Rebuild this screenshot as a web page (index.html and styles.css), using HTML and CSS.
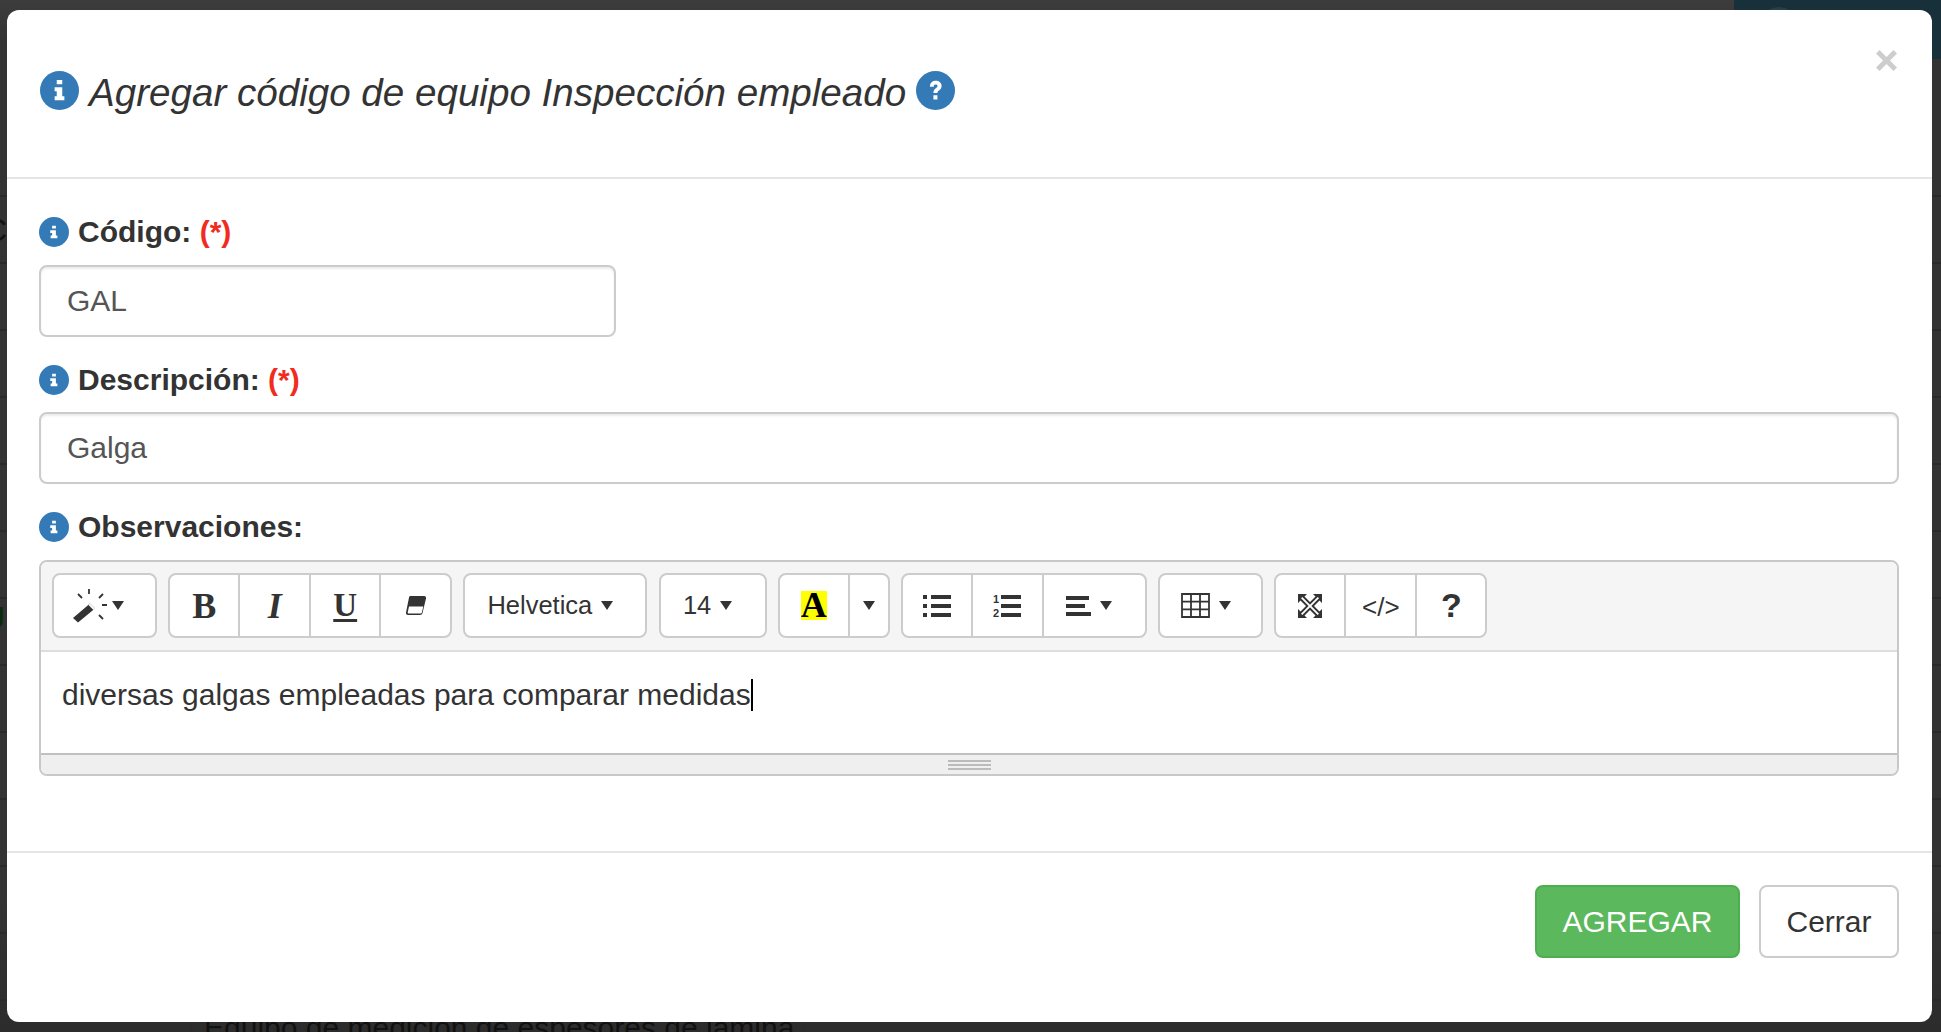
FILE: index.html
```html
<!DOCTYPE html>
<html lang="es">
<head>
<meta charset="utf-8">
<title>Agregar código de equipo</title>
<link rel="stylesheet" href="styles.css">
</head>
<body>
<div class="backdrop">
  <div class="bg-lines"></div>
  <div class="bg-teal"><span class="bg-avatar"></span></div>
  <div class="bg-c">C</div>
  <div class="bg-u">U</div>
  <div class="bg-row">Equipo de medición de espesores de lámina</div>
</div>
<main class="modal">
  <header class="modal-header">
    <button class="close" aria-label="Cerrar">
      <svg width="21" height="21" viewBox="0 0 21 21"><path d="M0 3.500 3.500 0 10.500 7 17.500 0 21 3.500 14 10.500 21 17.500 17.500 21 10.500 14 3.500 21 0 17.500 7 10.500Z" fill="#cdcdcd"/></svg>
    </button>
    <svg class="ico ico-lg" viewBox="0 0 24 24"><circle cx="12" cy="12" r="12" fill="#337ab7"/><path d="M10.300 5.500h3.400v2.600h-3.400zM9 10h4.700v5.500H15V18H9v-2.500h1.300v-3H9z" fill="#fff"/></svg>
    <h4 class="modal-title">Agregar código de equipo Inspección empleado</h4>
    <svg class="ico ico-lg" viewBox="0 0 24 24"><circle cx="12" cy="12" r="12" fill="#337ab7"/><path transform="translate(12 12) scale(.85) translate(-12 -12)" d="M8 9.200C8 6.400 9.900 5 12.200 5c2.300 0 4.200 1.500 4.200 3.800 0 1.700-.9 2.500-1.900 3.200-.8.600-1.100.900-1.100 1.900h-2.900c0-1.800.5-2.600 1.700-3.500.8-.6 1.300-1 1.300-1.600 0-.7-.6-1.200-1.400-1.200-.9 0-1.400.6-1.400 1.600zM10.500 15.500h2.900v3h-2.900z" fill="#fff"/></svg>
  </header>
  <section class="modal-body">
    <div class="form-group">
      <label class="label"><svg class="ico" viewBox="0 0 24 24"><circle cx="12" cy="12" r="12" fill="#337ab7"/><path d="M10.500 7h3v2.200h-3zM9 10.500h4.500v4.300h1.200V17H9.300v-2.200h1.200v-2.100H9z" fill="#fff"/></svg><span>Código: <em class="req">(*)</em></span></label>
      <div class="input input-short">GAL</div>
    </div>
    <div class="form-group">
      <label class="label"><svg class="ico" viewBox="0 0 24 24"><circle cx="12" cy="12" r="12" fill="#337ab7"/><path d="M10.500 7h3v2.200h-3zM9 10.500h4.500v4.300h1.200V17H9.300v-2.200h1.200v-2.100H9z" fill="#fff"/></svg><span>Descripción: <em class="req">(*)</em></span></label>
      <div class="input">Galga</div>
    </div>
    <div class="form-group">
      <label class="label"><svg class="ico" viewBox="0 0 24 24"><circle cx="12" cy="12" r="12" fill="#337ab7"/><path d="M10.500 7h3v2.200h-3zM9 10.500h4.500v4.300h1.200V17H9.300v-2.200h1.200v-2.100H9z" fill="#fff"/></svg><span>Observaciones:</span></label>
      <div class="editor">
        <div class="toolbar">
          <div class="group w105"><span class="btn grow shift-lg">
            <svg width="34" height="34" viewBox="0 0 34 34"><path d="M0 29 17 14.500l5 5L5 33.500z" fill="#333"/><path d="M15.500 16 20.500 21l1.500-1.500-5-5z" fill="#fff"/><path d="M16 0v5M5 5l4 4M30 5l-4 4M29 16h5M26 26l4 4" stroke="#333" stroke-width="1.800" fill="none"/></svg><i class="caret tight"></i></span></div>
          <div class="group w284">
            <span class="btn w71 glyph serif-b">B</span>
            <span class="btn w71 glyph serif-i">I</span>
            <span class="btn w70 glyph serif-u">U</span>
            <span class="btn grow"><svg width="22" height="21" viewBox="0 0 22 21"><path d="M5.500 1H19c1.500 0 2.400 1 2 2.500l-3.500 14.500c-.3 1.300-1.200 2-2.500 2H3c-1.500 0-2.300-1-2-2.500L4 2.500C4.200 1.500 4.700 1 5.500 1z" fill="#333"/><path d="M4 11.500h14.300l-1.500 6c-.1.600-.4.900-1 .9H3.500c-.6 0-.9-.3-.8-.9z" fill="#fff"/></svg></span>
          </div>
          <div class="group w184"><span class="btn grow text shift">Helvetica<i class="caret"></i></span></div>
          <div class="group w108"><span class="btn grow text shift">14<i class="caret"></i></span></div>
          <div class="group w112">
            <span class="btn w71"><span class="color-a">A</span></span>
            <span class="btn grow"><i class="caret nomargin"></i></span>
          </div>
          <div class="group w246">
            <span class="btn w71"><svg width="28" height="22" viewBox="0 0 28 22"><path d="M0 0h4v4H0zM8 0h20v4H8zM0 9h4v4H0zM8 9h20v4H8zM0 18h4v4H0zM8 18h20v4H8z" fill="#333"/></svg></span>
            <span class="btn w71"><svg width="28" height="24" viewBox="0 0 28 24"><path d="M8 1h20v4H8zM8 10h20v4H8zM8 19h20v4H8z" fill="#333"/><text x="0" y="9" class="ol">1</text><text x="0" y="23" class="ol">2</text></svg></span>
            <span class="btn grow shift"><svg width="25" height="20" viewBox="0 0 25 20"><path d="M0 0h23v4H0zM0 8h19v4H0zM0 16h25v4H0z" fill="#333"/></svg><i class="caret"></i></span>
          </div>
          <div class="group w105"><span class="btn grow shift"><svg width="29" height="25" viewBox="0 0 29 25"><path d="M1 1h27v23H1zM1 8.700h27M1 16.300h27M10 1v23M19 1v23" stroke="#333" stroke-width="1.800" fill="none"/></svg><i class="caret"></i></span></div>
          <div class="group w213">
            <span class="btn w71"><svg width="24" height="24" viewBox="0 0 24 24"><path d="M0 0h9L6.500 2.500 12 8l5.500-5.500L15 0h9v9l-2.500-2.500L16 12l5.500 5.500L24 15v9h-9l2.500-2.500L12 16l-5.500 5.500L9 24H0v-9l2.500 2.500L8 12 2.500 6.500 0 9zM4.300 3 3 4.300 10.700 12 3 19.700 4.300 21 12 13.300 19.700 21 21 19.700 13.300 12 21 4.300 19.700 3 12 10.700z" fill="#333" fill-rule="evenodd"/></svg></span>
            <span class="btn w71"><span class="code">&lt;/&gt;</span></span>
            <span class="btn grow"><span class="help">?</span></span>
          </div>
        </div>
        <div class="editable">diversas galgas empleadas para comparar medidas<span class="cursor"></span></div>
        <div class="statusbar"><span class="grip"></span></div>
      </div>
    </div>
  </section>
  <footer class="modal-footer">
    <span class="button success">AGREGAR</span>
    <span class="button default">Cerrar</span>
  </footer>
</main>
</body>
</html>
```

FILE: styles.css
```css
* { box-sizing: border-box; }
html, body { margin: 0; height: 100%; }
body {
  width: 1941px;
  height: 1032px;
  overflow: hidden;
  position: relative;
  background: #333;
  font-family: "Liberation Sans", Arial, sans-serif;
  font-size: 30px;
  color: #333;
}
.backdrop { position: absolute; inset: 0; background: linear-gradient(#3c3c3c, #333 40px, #333 900px, #2c2c2c); overflow: hidden; }
.bg-lines { position: absolute; left: 0; right: 0; top: 130px; bottom: 0; background: repeating-linear-gradient(#0000 0, #0000 65px, #2a2a2a 65px, #2a2a2a 67px); }
.bg-teal { position: absolute; right: 0; top: 0; width: 207px; height: 59px; background: #17303a; overflow: hidden; }
.bg-avatar { display: block; width: 40px; height: 40px; margin: 7px 0 0 25px; border-radius: 50%; background: #263f48; }
.bg-c { position: absolute; left: -16px; top: 212px; font-size: 32px; color: #111; }
.bg-u { position: absolute; left: -18px; top: 600px; font-size: 32px; color: #0a2a0a; }
.bg-row { position: absolute; left: 191px; width: 613px; top: 1011px; height: 30px; padding-left: 12px; font-size: 30px; line-height: 34px; color: #111; white-space: nowrap; border-left: 1px solid #2a2a2a; border-right: 1px solid #2a2a2a; }

.modal {
  position: absolute;
  left: 7px;
  top: 10px;
  width: 1925px;
  height: 1012px;
  background: #fff;
  border-radius: 12px;
  display: flex;
  flex-direction: column;
}
.modal-header {
  height: 169px;
  border-bottom: 2px solid #e5e5e5;
  padding: 61px 32px 0 33px;
  display: flex;
  align-items: flex-start;
  gap: 10px;
  position: relative;
}
.close {
  position: absolute;
  right: 35px;
  top: 40px;
  padding: 0;
  border: 0;
  background: none;
  display: block;
  line-height: 0;
}
.ico { width: 30px; height: 30px; flex: none; display: block; }
.ico-lg { width: 39px; height: 39px; }
.modal-title {
  margin: 2px 0 0;
  font-size: 38.600px;
  font-weight: 400;
  font-style: italic;
  line-height: 39px;
  white-space: nowrap;
}
.modal-body { padding: 38px 33px 0 32px; flex: 1; }
.form-group { margin-bottom: 28px; }
.label { display: flex; align-items: center; gap: 9px; height: 30px; margin-bottom: 18px; font-weight: 700; line-height: 30px; }
.form-group:nth-child(2) .label { margin-bottom: 17px; }
.req { color: #f12c1f; font-style: normal; }
.input {
  height: 72px;
  border: 2px solid #ccc;
  border-radius: 8px;
  padding: 0 26px;
  line-height: 68px;
  color: #555;
  box-shadow: inset 0 2px 2px rgba(0,0,0,.075);
}
.input-short { width: 577px; }
.editor { border: 2px solid #c8c8c8; border-radius: 8px; height: 216px; overflow: hidden; }
.toolbar {
  height: 90px;
  background: #f5f5f5;
  border-bottom: 2px solid #ddd;
  padding: 11px 0 0 11px;
  display: flex;
  gap: 11.200px;
}
.group { display: flex; height: 65px; border: 2px solid #ccc; border-radius: 8px; background: #fff; flex: none; }
.w105 { width: 105px; }
.w284 { width: 284px; }
.w184 { width: 184px; }
.w108 { width: 108px; }
.w112 { width: 112px; }
.w246 { width: 246px; }
.w213 { width: 213px; }
.btn { display: flex; align-items: center; justify-content: center; height: 100%; flex: none; border-right: 2px solid #ccc; }
.btn.grow { flex: 1; border-right: 0; }
.btn.shift { padding-right: 10px; }
.btn.shift-lg { padding-right: 13px; }
.w71 { width: 71px; }
.w70 { width: 70px; }
.group .w71:first-child { width: 70px; }
.text { font-size: 25.500px; }
.caret {
  display: inline-block;
  width: 0; height: 0;
  margin-left: 9px;
  border-top: 9px solid #333;
  border-left: 6.500px solid transparent;
  border-right: 6.500px solid transparent;
}
.caret.nomargin { margin-left: 0; }
.caret.tight { margin-left: 5px; }
.glyph { font-family: "Liberation Serif", serif; font-size: 36px; line-height: 1; }
.serif-b { font-weight: 700; }
.serif-i { font-weight: 700; font-style: italic; }
.serif-u { font-weight: 700; font-size: 33px; text-decoration: underline; text-underline-offset: 3px; }
.color-a { background: #ff0; color: #000; font-family: "Liberation Serif", serif; font-weight: 700; font-size: 36px; line-height: 29px; width: 26px; text-align: center; display: block; height: 29px; overflow: hidden; }
.ol { font-family: "Liberation Sans", sans-serif; font-size: 11px; font-weight: 700; fill: #333; }
.code { font-size: 26px; padding-top: 4px; }
.help { font-size: 34px; font-weight: 700; }
.editable { height: 101px; background: #fff; padding: 22px 0 0 21px; color: #333; line-height: 42px; }
.cursor { display: inline-block; width: 2px; height: 32px; background: #000; vertical-align: -6px; }
.statusbar { height: 21px; background: #efefef; border-top: 2px solid #c0c0c0; display: flex; justify-content: center; align-items: center; }
.grip { width: 43px; height: 10px; border-top: 2px solid #bbb; border-bottom: 2px solid #bbb; background: linear-gradient(#bbb, #bbb) center / 100% 2px no-repeat; }
.modal-footer {
  height: 171px;
  border-top: 2px solid #e5e5e5;
  padding: 32px 33px 0;
  display: flex;
  justify-content: flex-end;
  align-items: flex-start;
  gap: 19px;
}
.button { height: 73px; line-height: 69px; border: 2px solid #ccc; border-radius: 8px; text-align: center; }
.success { background: #5cb85c; border-color: #4cae4c; color: #fff; width: 205px; }
.default { background: #fff; color: #333; width: 140px; }
```
